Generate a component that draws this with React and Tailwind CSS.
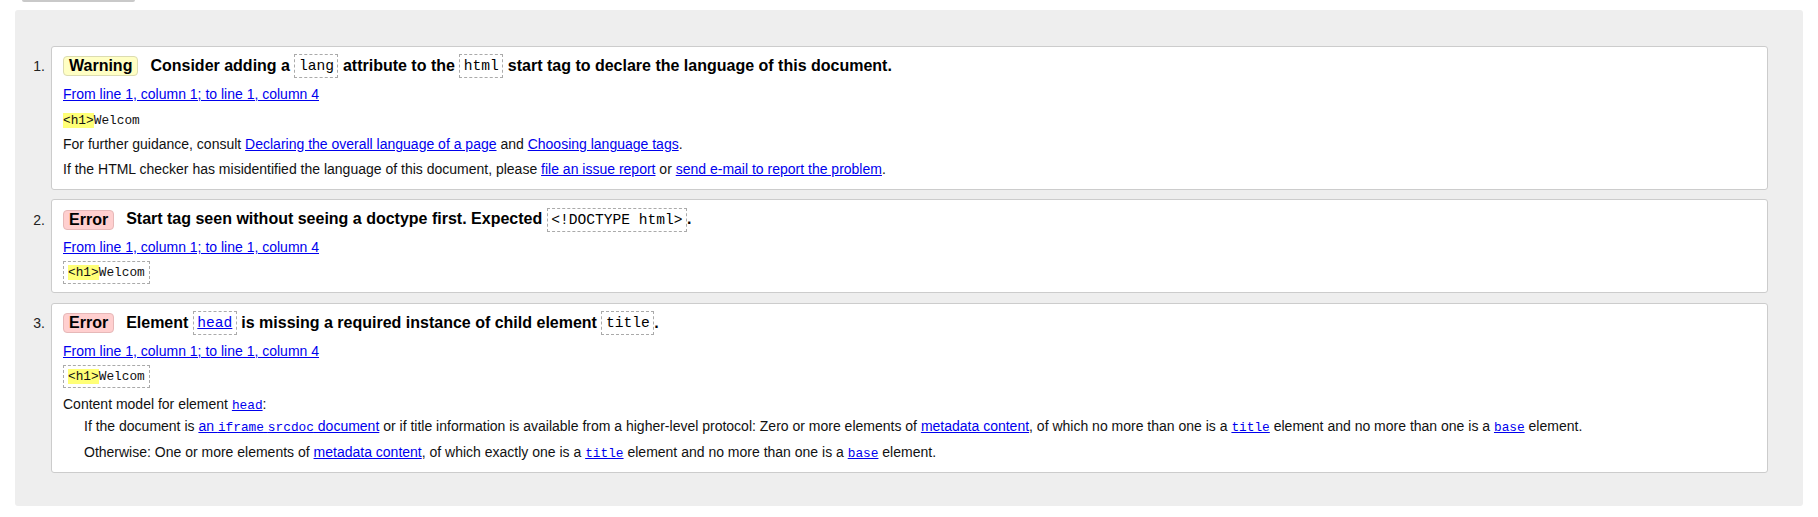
// Validator results — list of messages
const sans = 'font-["Liberation_Sans",Arial,sans-serif]'

function Code({ children, boxed = false, className = '' }) {
  return (
    <code
      className={`font-["Liberation_Mono",monospace] ${boxed ? 'inline-block border border-dashed border-[#aaa] px-[3.5px]' : ''} ${className}`}
    >
      {children}
    </code>
  )
}

function A({ children }) {
  return <a href="#" className="text-[#00e] underline">{children}</a>
}

function Mark() {
  return <span className="bg-[#ffff77]">&lt;h1&gt;</span>
}

function Badge({ kind }) {
  const styles = kind === 'Warning'
    ? 'bg-[#ffffc4] border-[#dcdcb0]'
    : 'bg-[#ffcfcf] border-[#e6b8b8]'
  return (
    <span className={`inline-block border rounded-[4px] px-[5px] leading-[18px] text-[16px] font-bold text-black ${styles}`}>
      {kind}
    </span>
  )
}

function Title({ kind, children }) {
  return (
    <div className="flex items-center h-[25px]">
      <Badge kind={kind} />
      <p className="ml-[12px] text-[16px] font-bold text-black leading-[24px]">{children}</p>
    </div>
  )
}

function TitleCode({ children }) {
  return (
    <Code boxed className="text-[14.6px] font-normal leading-[22px] align-middle">{children}</Code>
  )
}

// small mono inside running text, kept from growing the line box
function Mono({ children }) {
  return <Code className="text-[12.8px] leading-none">{children}</Code>
}

function Card({ children }) {
  return (
    <div className="flex-1 bg-white border border-[#ccc] rounded-[3px] pt-[7px] pb-[7px] pl-[11px] pr-[11px]">
      {children}
    </div>
  )
}

function Item({ n, children }) {
  return (
    <li className="flex items-baseline">
      <span className="w-[36px] shrink-0 text-right pr-[6px] text-[14px] text-[#222]">{n}.</span>
      {children}
    </li>
  )
}

export default function App() {
  return (
    <div className={`${sans} text-[14px] text-[#111] bg-white min-h-[517px]`}>
      <div className="ml-[22px] w-[113px] h-[1.5px] bg-[#c9c9c9] rounded-b-[2px]" />

      <div className="mt-[8.5px] mx-[15px] bg-[#eeeeee] rounded-[3px] pt-[35.5px] pb-[33px] pr-[35px]">
        <ol className="flex flex-col gap-[9.5px]">
          <Item n={1}>
            <Card>
              <Title kind="Warning">
                Consider adding a <TitleCode>lang</TitleCode> attribute to the <TitleCode>html</TitleCode> start tag to declare the language of this document.
              </Title>
              <div className="mt-[3px] leading-[25px]">
                <p><A>From line 1, column 1; to line 1, column 4</A></p>
                <p><Mono><Mark />Welcom</Mono></p>
                <p>For further guidance, consult <A>Declaring the overall language of a page</A> and <A>Choosing language tags</A>.</p>
                <p>If the HTML checker has misidentified the language of this document, please <A>file an issue report</A> or <A>send e-mail to report the problem</A>.</p>
              </div>
            </Card>
          </Item>

          <Item n={2}>
            <Card>
              <Title kind="Error">
                Start tag seen without seeing a doctype first. Expected <TitleCode>&lt;!DOCTYPE html&gt;</TitleCode>.
              </Title>
              <div className="mt-[3px] leading-[25px]">
                <p><A>From line 1, column 1; to line 1, column 4</A></p>
                <p className="h-[25px] flex items-center">
                  <Code boxed className="text-[12.8px] leading-[21px] px-[4px]"><Mark />Welcom</Code>
                </p>
              </div>
            </Card>
          </Item>

          <Item n={3}>
            <Card>
              <Title kind="Error">
                Element <TitleCode><A>head</A></TitleCode> is missing a required instance of child element <TitleCode>title</TitleCode>.
              </Title>
              <div className="mt-[3px] leading-[25px]">
                <p><A>From line 1, column 1; to line 1, column 4</A></p>
                <p className="h-[25px] flex items-center">
                  <Code boxed className="text-[12.8px] leading-[21px] px-[4px]"><Mark />Welcom</Code>
                </p>
              </div>
              <p className="mt-[5px] leading-[20px]">
                Content model for element <Mono><A>head</A></Mono>:
              </p>
              <div className="ml-[21px] leading-[20px] pb-[3px]">
                <p className="mt-[2px]">
                  If the document is <A>an <Mono>iframe</Mono> <Mono>srcdoc</Mono> document</A> or if title information is available from a higher-level protocol: Zero or more elements of <A>metadata content</A>, of which no more than one is a <Mono><A>title</A></Mono> element and no more than one is a <Mono><A>base</A></Mono> element.
                </p>
                <p className="mt-[6px]">
                  Otherwise: One or more elements of <A>metadata content</A>, of which exactly one is a <Mono><A>title</A></Mono> element and no more than one is a <Mono><A>base</A></Mono> element.
                </p>
              </div>
            </Card>
          </Item>
        </ol>
      </div>
    </div>
  )
}
